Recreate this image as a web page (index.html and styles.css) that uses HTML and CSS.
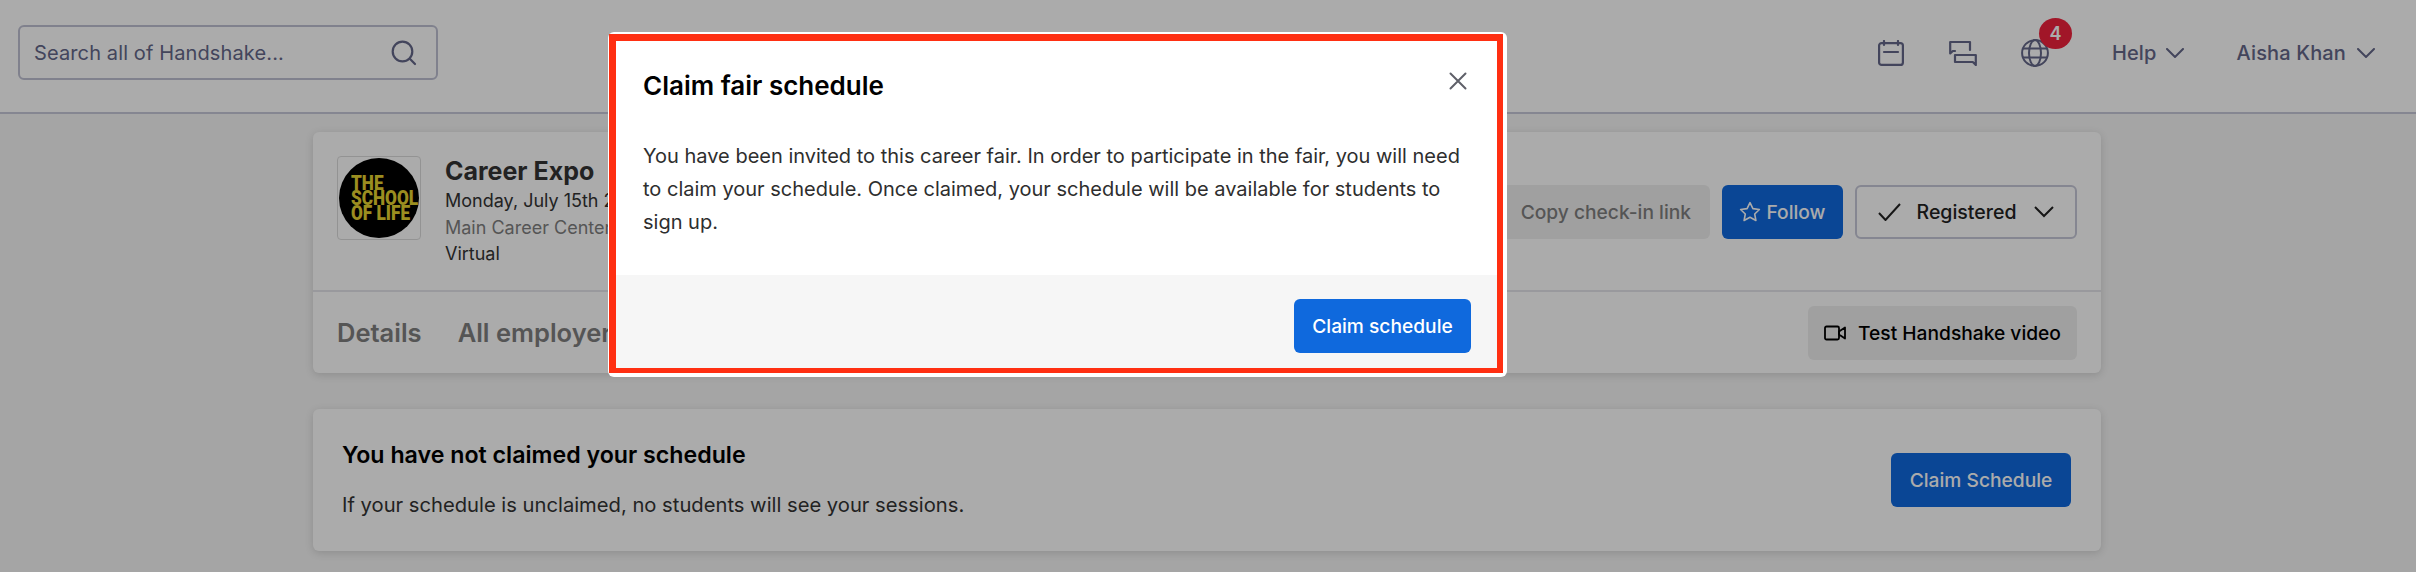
FILE: index.html
```html
<!DOCTYPE html>
<html lang="en">
<head>
<meta charset="utf-8">
<title>Claim fair schedule</title>
<link rel="stylesheet" href="styles.css">
</head>
<body>
<header class="topbar">
  <div class="search">
    <span class="search-text">Search all of Handshake...</span>
    <svg class="search-icon" width="26" height="26" viewBox="0 0 26 26" fill="none" stroke="currentColor" stroke-width="2.2" stroke-linecap="round"><circle cx="11.5" cy="11.5" r="9.8"/><path d="M18.8 18.8l5.2 5.2"/></svg>
  </div>
  <nav class="topnav">
    <svg class="nav-cal" width="26" height="26" viewBox="0 0 26 26" fill="none" stroke="currentColor" stroke-width="2.2" stroke-linecap="round"><rect x="1.1" y="3.1" width="23.8" height="21.8" rx="2.5"/><path d="M6 1v4M20 1v4M6 12h14"/></svg>
    <svg class="nav-chat" width="28" height="26" viewBox="0 0 28 26" fill="none" stroke="currentColor" stroke-width="2.2" stroke-linejoin="round" stroke-linecap="round"><path d="M21 10V2H1.200v11.500l2.600-2.500H6"/><path d="M6 15h20.800v10l-3-3H6z"/></svg>
    <span class="globe-wrap">
      <svg width="28" height="28" viewBox="0 0 28 28" fill="none" stroke="currentColor" stroke-width="2"><circle cx="14" cy="14" r="12.900"/><ellipse cx="14" cy="14" rx="6" ry="12.900"/><path d="M2 9.500h24M2 18.500h24"/></svg>
      <span class="badge">4</span>
    </span>
    <span class="nav-link help">Help <svg width="18" height="10" viewBox="0 0 18 10" fill="none" stroke="currentColor" stroke-width="2" stroke-linecap="round"><path d="M1 1l8 8 8-8"/></svg></span>
    <span class="nav-link">Aisha Khan <svg width="18" height="10" viewBox="0 0 18 10" fill="none" stroke="currentColor" stroke-width="2" stroke-linecap="round"><path d="M1 1l8 8 8-8"/></svg></span>
  </nav>
</header>

<main class="content">
  <section class="card fair">
    <div class="fair-top">
      <div class="logo-box">
        <div class="logo-circle"><span class="logo-text">THE<br>SCHOOL<br>OF LIFE</span></div>
      </div>
      <div class="fair-info">
        <h1>Career Expo</h1>
        <p>Monday, July 15th 2024, 9:00 AM</p>
        <p class="muted">Main Career Center</p>
        <p>Virtual</p>
      </div>
      <div class="fair-actions">
        <button class="btn btn-gray muted-text">Copy check-in link</button>
        <button class="btn btn-blue btn-follow"><svg width="22" height="22" viewBox="0 0 22 22" fill="none" stroke="currentColor" stroke-width="1.600" stroke-linejoin="round"><path d="M11 1.600l2.900 6 6.500.9-4.700 4.500 1.200 6.500-5.900-3.200-5.900 3.200 1.200-6.500L1.600 8.500l6.500-.9z"/></svg>Follow</button>
        <button class="btn btn-outline"><svg width="23" height="18" viewBox="0 0 23 18" fill="none" stroke="currentColor" stroke-width="2"><path d="M1 10l6.500 7L22 1"/></svg><span class="reg-label">Registered</span><svg width="20" height="12" viewBox="0 0 20 12" fill="none" stroke="currentColor" stroke-width="2"><path d="M1 1l9 9 9-9"/></svg></button>
      </div>
    </div>
    <div class="fair-tabs">
      <a class="tab">Details</a>
      <a class="tab">All employers</a>
      <button class="btn btn-gray btn-video"><svg width="22" height="16" viewBox="0 0 22 16" fill="none" stroke="currentColor" stroke-width="1.800" stroke-linejoin="round"><rect x="1" y="1.500" width="14" height="13" rx="1.500"/><path d="M15 6.500l6-4v11l-6-4z"/></svg>Test Handshake video</button>
    </div>
  </section>

  <section class="card notice">
    <div>
      <h2>You have not claimed your schedule</h2>
      <p>If your schedule is unclaimed, no students will see your sessions.</p>
    </div>
    <button class="btn btn-blue btn-claim">Claim Schedule</button>
  </section>
</main>

<div class="overlay"></div>

<div class="modal">
  <div class="modal-frame">
    <div class="modal-head">
      <h3>Claim fair schedule</h3>
      <svg width="18" height="18" viewBox="0 0 18 18" fill="none" stroke="#5f6069" stroke-width="2" stroke-linecap="round"><path d="M1.500 1.500l15 15M16.500 1.500l-15 15"/></svg>
    </div>
    <p class="modal-body">You have been invited to this career fair. In order to participate in the fair, you will need to claim your schedule. Once claimed, your schedule will be available for students to sign up.</p>
    <div class="modal-foot">
      <button class="btn btn-primary">Claim schedule</button>
    </div>
  </div>
</div>
</body>
</html>
```

FILE: styles.css
```css
* { box-sizing: border-box; }
html, body { margin: 0; padding: 0; }
body {
  width: 2416px;
  height: 572px;
  overflow: hidden;
  position: relative;
  background: #f6f6f6;
  font-family: Inter, "Liberation Sans", sans-serif;
  font-size: 18px;
  color: #333;
}
h1, h2, h3, p { margin: 0; }

.topbar {
  height: 114px;
  background: #fff;
  border-bottom: 2px solid #c6c8d8;
  padding: 25px 41px 0 18px;
  display: flex;
  align-items: flex-start;
  justify-content: space-between;
}
.search {
  width: 420px;
  height: 55px;
  border: 2px solid #bfc1d3;
  border-radius: 6px;
  padding: 0 19px 0 14px;
  display: flex;
  align-items: center;
  justify-content: space-between;
  color: #646789;
}
.search-text { font-size: 20px; letter-spacing: 0.12px; }
.topnav {
  display: flex;
  align-items: center;
  height: 56px;
  color: #646789;
}
.nav-cal { margin-right: 45px; }
.nav-chat { margin-right: 44px; }
.globe-wrap { position: relative; display: flex; margin-right: 63px; }
.badge {
  position: absolute;
  left: 18px;
  top: -21px;
  width: 33px;
  height: 31px;
  border-radius: 50%;
  background: #f0213c;
  color: #fff;
  font-size: 18px;
  font-weight: 600;
  display: flex;
  align-items: center;
  justify-content: center;
}
.nav-link {
  font-size: 20px;
  font-weight: 500;
  display: flex;
  align-items: center;
  gap: 11px;
  letter-spacing: 0.15px;
}
.help { margin-right: 53px; gap: 9px; }

.content { padding: 18px 315px 0 313px; }
.card {
  background: #fff;
  border-radius: 6px;
  box-shadow: 0 2px 8px rgba(0, 0, 0, 0.14);
}
.fair { height: 241px; margin-bottom: 36px; }
.fair-top {
  height: 160px;
  padding: 24px 24px 0 24px;
  border-bottom: 2px solid #e4e4ea;
  display: flex;
  align-items: flex-start;
}
.logo-box {
  width: 84px;
  height: 84px;
  border: 1px solid #dcdcdc;
  border-radius: 4px;
  padding: 1px;
  flex: none;
}
.logo-circle {
  width: 80px;
  height: 80px;
  border-radius: 50%;
  background: #000;
  color: #e8d430;
  display: flex;
  align-items: center;
  padding-left: 12px;
  font-family: Roboto, sans-serif;
  font-weight: 900;
  font-size: 19.500px;
  line-height: 15px;
}
.logo-text {
  display: block;
  transform: scaleX(0.88);
  transform-origin: left center;
  white-space: nowrap;
}
.fair-info { margin-left: 24px; line-height: 26.500px; font-size: 18px; }
.fair-info h1 {
  font-size: 25px;
  font-weight: 700;
  line-height: 32px;
  margin-top: -1px;
  margin-bottom: 1px;
}
.muted { color: #7f7f7f; }
.fair-actions {
  margin-left: auto;
  margin-top: 29px;
  display: flex;
  gap: 12px;
}
.btn {
  height: 54px;
  border: 0;
  border-radius: 6px;
  padding: 0 19px;
  font-family: inherit;
  font-size: 19.200px;
  font-weight: 500;
  display: inline-flex;
  align-items: center;
  justify-content: center;
}
.btn-gray { background: #efefef; color: #000; }
.muted-text { color: #7f7f7f; }
.btn-blue { background: #0f69df; color: #fff; }
.btn-primary { background: #0f69dd; color: #fff; width: 177px; padding: 0; }
.btn-claim { width: 180px; padding: 0; }
.btn-follow { width: 121px; padding: 0; gap: 5px; }
.btn-outline {
  width: 222px;
  padding: 0;
  gap: 16px;
  background: #fff;
  color: #222;
  border: 2px solid #c6c8d8;
}
.reg-label { font-size: 19.500px; margin-right: 2px; }
.fair-tabs {
  height: 81px;
  padding: 0 24px 0 24px;
  display: flex;
  align-items: center;
  gap: 36px;
}
.tab { font-size: 25.500px; font-weight: 600; color: #7f7f7f; }
.btn-video { margin-left: auto; width: 269px; padding: 0; gap: 12px; }

.notice {
  height: 142px;
  padding: 0 30px 0 29px;
  display: flex;
  align-items: center;
  justify-content: space-between;
}
.notice h2 { font-size: 23.200px; font-weight: 600; color: #000; line-height: 30px; margin-bottom: 20px; }
.notice p { font-size: 20.200px; line-height: 30px; color: #333; }

.overlay {
  position: absolute;
  inset: 0;
  background: rgba(0, 0, 0, 0.33);
}

.modal {
  position: absolute;
  left: 608px;
  top: 32px;
  width: 899px;
  height: 345px;
  padding: 2px 4px 4px 1px;
  background: #fff;
  border-radius: 6px;
}
.modal-frame {
  height: 100%;
  border-style: solid;
  border-color: #ff2f12;
  border-width: 7px 6px 5px 7px;
  display: flex;
  flex-direction: column;
  background: #fff;
}
.modal-head {
  height: 62px;
  padding: 29px 30px 0 27px;
  display: flex;
  align-items: flex-start;
  justify-content: space-between;
}
.modal-head h3 { font-size: 26px; font-weight: 600; color: #000; line-height: 32px; }
.modal-head svg { margin-top: 2px; }
.modal-body {
  padding: 37px 26px 0 27px;
  font-size: 20px;
  line-height: 33px;
  color: #2e2e2e;
  flex: 1;
}
.modal-foot {
  height: 93px;
  background: #f6f6f6;
  padding: 24px 26px 0 0;
  display: flex;
  justify-content: flex-end;
  align-items: flex-start;
}
```
